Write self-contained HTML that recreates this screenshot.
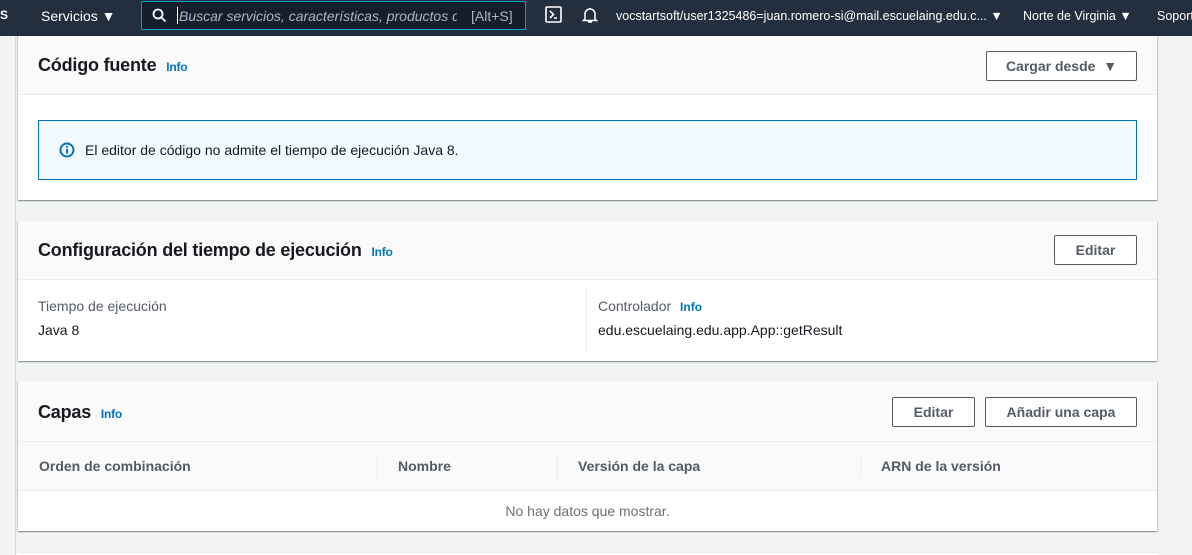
<!DOCTYPE html>
<html style="width:1192px;height:555px;overflow:hidden"><head><meta charset="utf-8"><style>
*{box-sizing:border-box;margin:0;padding:0}
body{width:1192px;height:555px;overflow:hidden;background:#f2f3f3;font-family:"Liberation Sans",sans-serif;color:#16191f;position:relative}
.abs{position:absolute;white-space:nowrap}
.nav{position:absolute;left:0;top:0;width:1192px;height:36px;background:#232f3e;color:#fff;font-size:13px;z-index:2}
.card{position:absolute;left:18px;width:1139px;background:#fff;box-shadow:0 1px 1px 0 rgba(0,28,36,.3),1px 1px 1px 0 rgba(0,28,36,.15),-1px 1px 1px 0 rgba(0,28,36,.15)}
.hd{position:absolute;left:0;top:0;width:100%;background:#fafafa;border-bottom:1px solid #eaeded}
.h2{font-size:18px;font-weight:bold;letter-spacing:-0.2px}
.info{font-size:12px;font-weight:bold;color:#0073bb}
.btn{position:absolute;height:30px;border:1px solid #545b64;border-radius:2px;background:#fff;color:#545b64;font-weight:bold;font-size:14px;text-align:center;line-height:28px}
.th{font-size:14px;font-weight:bold;color:#545b64}
.sep{position:absolute;width:1px;background:#eaeded}
</style></head><body>
<div class="nav">
 <div class="abs" style="left:0;top:8px;font-size:12px;font-weight:bold">S</div>
 <div class="abs" style="left:41px;top:8px;font-size:14px">Servicios ▼</div>
 <div class="abs" style="left:141px;top:1px;width:385px;height:29px;background:#161e2d;border:1px solid #00a1c9;border-radius:2px"></div>
 <svg class="abs" style="left:152px;top:8px" width="15" height="15" viewBox="0 0 15 15"><circle cx="6" cy="6" r="4.5" stroke="#fff" stroke-width="1.8" fill="none"/><path d="M9.5 9.5L13.5 13.5" stroke="#fff" stroke-width="1.8"/></svg>
 <div class="abs" style="left:177px;top:7px;width:1px;height:17px;background:#fff"></div>
 <div class="abs" style="left:179px;top:8px;font-size:14px;font-style:italic;color:#aab7b8;width:278px;overflow:hidden">Buscar servicios, características, productos de</div>
 <div class="abs" style="left:471px;top:8px;font-size:14px;color:#aab7b8">[Alt+S]</div>
 <svg class="abs" style="left:545px;top:6px" width="17" height="17" viewBox="0 0 17 17"><rect x="1" y="1" width="15" height="15" rx="1" stroke="#fff" stroke-width="1.6" fill="none"/><path d="M5 5l3.5 3.5L5 12M9 12h3" stroke="#fff" stroke-width="1.6" fill="none"/></svg>
 <svg class="abs" style="left:581px;top:6px" width="18" height="18" viewBox="0 0 18 18"><path d="M4 13V8a5 5 0 0 1 10 0v5l1.5 1.5h-13z M7 16h4M9 2v1" stroke="#fff" stroke-width="1.5" fill="none"/></svg>
 <div class="abs" style="left:616px;top:9px;font-size:12.5px">vocstartsoft/user1325486=juan.romero-si@mail.escuelaing.edu.c... ▼</div>
 <div class="abs" style="left:1023px;top:9px;font-size:12.5px">Norte de Virginia ▼</div>
 <div class="abs" style="left:1157px;top:9px;font-size:12.5px">Soporte</div>
</div>
<div class="abs" style="left:15px;top:36px;width:1px;height:519px;background:#d5dbdb"></div>

<div class="card" style="top:30px;height:170px">
 <div class="hd" style="height:65px"></div>
 <div class="abs h2" style="left:20px;top:25px">Código fuente <span class="info" style="margin-left:5px">Info</span></div>
 <div class="btn" style="left:968px;top:21px;width:151px">Cargar desde &nbsp;▼</div>
 <div class="abs" style="left:20px;top:90px;width:1099px;height:60px;background:#f1faff;border:1px solid #0073bb"></div>
 <svg class="abs" style="left:41px;top:112px" width="16" height="16" viewBox="0 0 16 16"><circle cx="8" cy="8" r="6.5" stroke="#0073bb" stroke-width="2" fill="none"/><path d="M8 7v4.5" stroke="#0073bb" stroke-width="2"/><circle cx="8" cy="4.8" r="1.1" fill="#0073bb"/></svg>
 <div class="abs" style="left:67px;top:112px;font-size:14px">El editor de código no admite el tiempo de ejecución Java 8.</div>
</div>

<div class="card" style="top:221px;height:140px">
 <div class="hd" style="height:59px"></div>
 <div class="abs h2" style="left:20px;top:19px">Configuración del tiempo de ejecución <span class="info" style="margin-left:5px">Info</span></div>
 <div class="btn" style="left:1036px;top:14px;width:83px">Editar</div>
 <div class="sep" style="left:568px;top:65px;height:65px"></div>
 <div class="abs" style="left:20px;top:77px;font-size:14px;color:#545b64">Tiempo de ejecución</div>
 <div class="abs" style="left:20px;top:101px;font-size:14px">Java 8</div>
 <div class="abs" style="left:580px;top:77px;font-size:14px;color:#545b64">Controlador <span class="info" style="margin-left:5px">Info</span></div>
 <div class="abs" style="left:580px;top:101px;font-size:14px">edu.escuelaing.edu.app.App::getResult</div>
</div>

<div class="card" style="top:381px;height:150px">
 <div class="hd" style="height:61px"></div>
 <div class="abs h2" style="left:20px;top:21px">Capas <span class="info" style="margin-left:5px">Info</span></div>
 <div class="btn" style="left:874px;top:16px;width:83px">Editar</div>
 <div class="btn" style="left:967px;top:16px;width:152px">Añadir una capa</div>
 <div class="abs" style="left:0;top:61px;width:1139px;height:49px;background:#fafafa;border-bottom:1px solid #eaeded"></div>
 <div class="sep" style="left:359px;top:74px;height:24px"></div>
 <div class="sep" style="left:539px;top:74px;height:24px"></div>
 <div class="sep" style="left:842px;top:74px;height:24px"></div>
 <div class="abs th" style="left:21px;top:77px">Orden de combinación</div>
 <div class="abs th" style="left:380px;top:77px">Nombre</div>
 <div class="abs th" style="left:560px;top:77px">Versión de la capa</div>
 <div class="abs th" style="left:863px;top:77px">ARN de la versión</div>
 <div class="abs" style="left:0;top:122px;width:1139px;text-align:center;font-size:14px;color:#687078">No hay datos que mostrar.</div>
</div>

<div class="card" style="top:552px;height:3px;box-shadow:none;border-top:1px solid #eaeded"></div>
</body></html>
